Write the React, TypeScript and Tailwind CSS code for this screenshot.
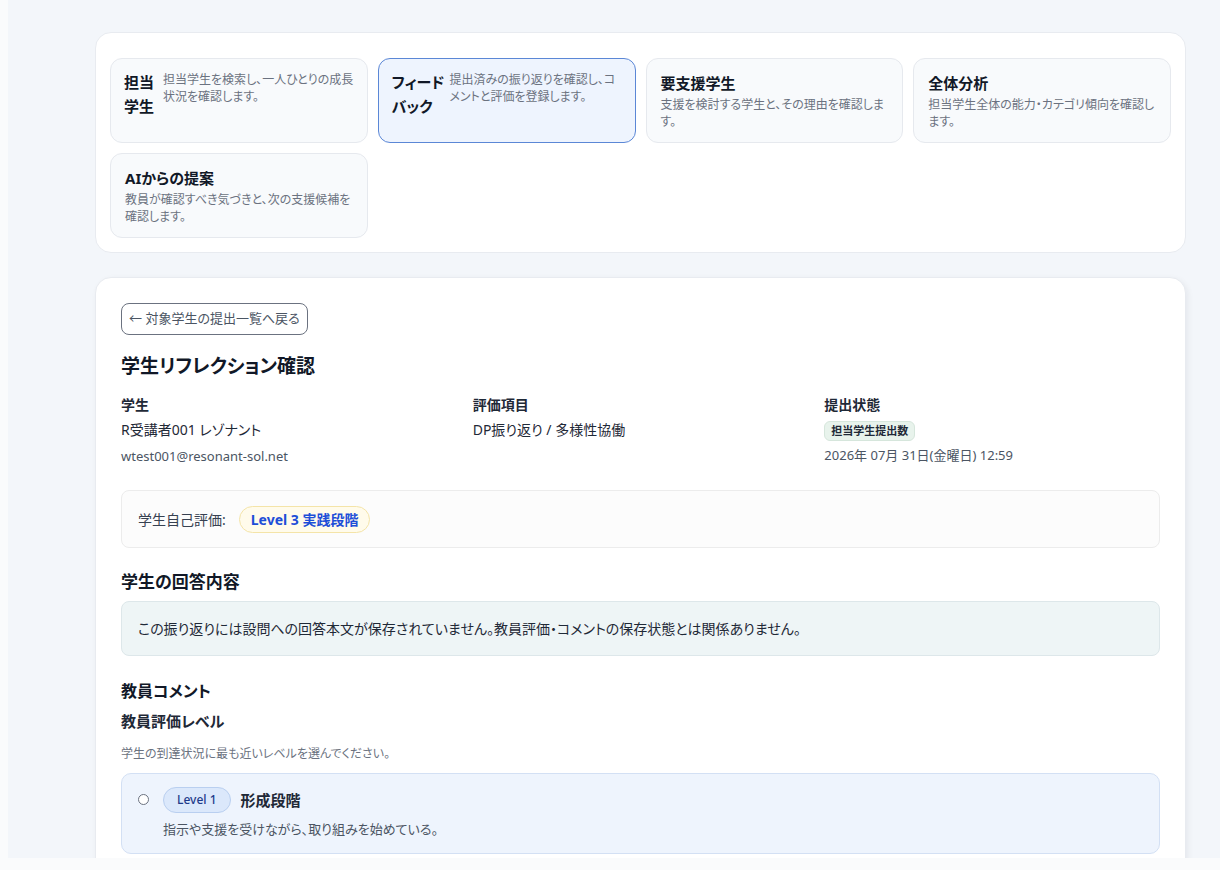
type Tile = {
  title: string[];
  desc: string;
  inline?: boolean;
  active?: boolean;
};

const tiles: Tile[] = [
  { title: ['担当', '学生'], desc: '担当学生を検索し、一人ひとりの成長状況を確認します。', inline: true },
  { title: ['フィード', 'バック'], desc: '提出済みの振り返りを確認し、コメントと評価を登録します。', inline: true, active: true },
  { title: ['要支援学生'], desc: '支援を検討する学生と、その理由を確認します。' },
  { title: ['全体分析'], desc: '担当学生全体の能力・カテゴリ傾向を確認します。' },
  { title: ['AIからの提案'], desc: '教員が確認すべき気づきと、次の支援候補を確認します。' },
];

function NavTile({ tile }: { tile: Tile }) {
  const box = tile.active
    ? 'border-[#5b87d6] bg-[#eef4fe]'
    : 'border-[#e6e9ee] bg-[#f8fafc]';

  if (tile.inline) {
    return (
      <div className={`flex rounded-xl border px-[13px] pt-[11px] pb-3 ${tile.active ? 'gap-[5px]' : 'gap-[9px]'} ${box}`}>
        <div className="shrink-0 text-[15px] leading-6 font-bold whitespace-nowrap text-[#111827]">
          {tile.title.map(l => (
            <div key={l}>{l}</div>
          ))}
        </div>
        <p className="pt-[1px] text-[12px] leading-[17px] text-[#6b7280]">{tile.desc}</p>
      </div>
    );
  }

  return (
    <div className={`rounded-xl border px-[14px] pt-[12px] pb-3 ${box}`}>
      <div className="text-[15px] leading-6 font-bold text-[#111827]">{tile.title[0]}</div>
      <p className="mt-[1px] text-[12px] leading-[17px] text-[#6b7280]">{tile.desc}</p>
    </div>
  );
}

export default function App() {
  return (
    <div className="min-h-screen bg-[#fafbfc] font-['Noto_Sans','Noto_Sans_CJK_JP',sans-serif] [font-feature-settings:'palt']">
      <div className="ml-2 h-[858px] overflow-hidden bg-[#f3f6fa] pt-8 pr-[34px] pl-[87px]">
        {/* top navigation card */}
        <div className="rounded-2xl border border-[#e8ebf0] bg-white px-[14px] pt-[25px] pb-[14px]">
          <div className="grid grid-cols-4 gap-[10px]">
            {tiles.map(t => (
              <NavTile key={t.title.join('')} tile={t} />
            ))}
          </div>
        </div>

        {/* detail card */}
        <div className="mt-6 rounded-2xl border border-[#e8ebf0] bg-white px-[25px] pt-[25px] pb-10 shadow-[2px_2px_6px_rgba(15,23,42,0.06)]">
          <button className="flex h-[32px] items-center rounded-lg border border-[#6b7280] px-[7px] text-[13px] text-[#4b5563]">
            ← 対象学生の提出一覧へ戻る
          </button>

          <h1 className="mt-[18px] text-[19px] leading-[26px] font-bold text-[#111827]">学生リフレクション確認</h1>

          <div className="mt-4 grid grid-cols-3 gap-4">
            <div>
              <div className="text-[14px] leading-5 font-bold text-[#1f2937]">学生</div>
              <div className="mt-[5px] text-[14px] leading-5 text-[#1f2937]">R受講者001 レゾナント</div>
              <div className="mt-[6px] text-[13px] leading-5 text-[#4b5563]">wtest001@resonant-sol.net</div>
            </div>
            <div>
              <div className="text-[14px] leading-5 font-bold text-[#1f2937]">評価項目</div>
              <div className="mt-[5px] text-[14px] leading-5 text-[#1f2937]">DP振り返り / 多様性協働</div>
            </div>
            <div>
              <div className="text-[14px] leading-5 font-bold text-[#1f2937]">提出状態</div>
              <span className="mt-[6px] inline-flex h-5 items-center rounded-md border border-[#d6e6dc] bg-[#e8f3ec] px-[6px] text-[11px] font-bold text-[#1f2937]">
                担当学生提出数
              </span>
              <div className="mt-[4px] text-[13px] leading-5 text-[#4b5563]">2026年 07月 31日(金曜日) 12:59</div>
            </div>
          </div>

          <div className="mt-6 flex h-[58px] items-center gap-[13px] rounded-lg border border-[#ececec] bg-[#fcfcfc] px-4">
            <span className="text-[14px] text-[#374151]">学生自己評価:</span>
            <span className="inline-flex h-[27px] items-center rounded-full border border-[#f4e4a8] bg-[#fffbeb] px-[11px] text-[14px] font-bold text-[#1d4ed8]">
              Level 3 実践段階
            </span>
          </div>

          <h2 className="mt-[22px] text-[17px] leading-6 font-bold text-[#111827]">学生の回答内容</h2>
          <div className="mt-[7px] flex h-[55px] items-center rounded-lg border border-[#dde7ea] bg-[#eef5f6] px-4 text-[14px] text-[#1f2937]">
            この振り返りには設問への回答本文が保存されていません。教員評価・コメントの保存状態とは関係ありません。
          </div>

          <h2 className="mt-[23px] text-[16px] leading-6 font-bold text-[#111827]">教員コメント</h2>
          <h3 className="mt-[7px] text-[15px] leading-[22px] font-bold text-[#1f2937]">教員評価レベル</h3>
          <p className="mt-[13px] text-[12px] leading-[18px] text-[#6b7280]">学生の到達状況に最も近いレベルを選んでください。</p>

          <div className="mt-[10px] flex gap-[14px] rounded-[10px] border border-[#d3e0f4] bg-[#eef4fd] pt-[13px] pr-4 pb-[14px] pl-4">
            <span className="mt-[7px] h-[11px] w-[11px] shrink-0 rounded-full border border-[#6b7280] bg-white" />
            <div>
              <div className="flex items-center gap-[10px]">
                <span className="inline-flex h-[26px] items-center rounded-full border border-[#b9cff0] bg-[#dbe8fb] px-[13px] text-[12px] font-medium text-[#1e3a8a]">
                  Level 1
                </span>
                <span className="text-[15px] font-bold text-[#1f2937]">形成段階</span>
              </div>
              <p className="mt-[6px] text-[13px] leading-5 text-[#4b5563]">指示や支援を受けながら、取り組みを始めている。</p>
            </div>
          </div>
        </div>
      </div>
    </div>
  );
}
